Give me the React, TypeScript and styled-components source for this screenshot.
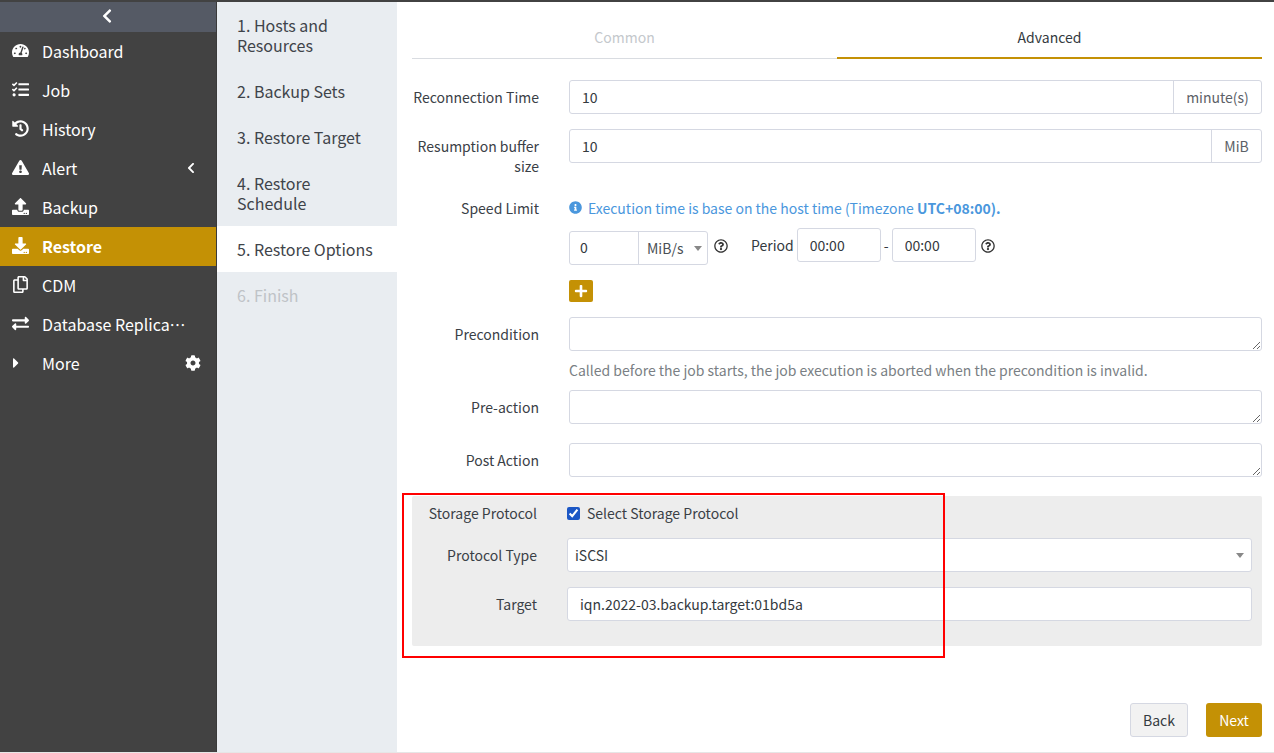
import React from "react";
import styled, { createGlobalStyle } from "styled-components";
import {
  FaCaretRight,
  FaChevronLeft,
  FaCog,
  FaDownload,
  FaExchangeAlt,
  FaExclamationTriangle,
  FaHistory,
  FaInfoCircle,
  FaPlus,
  FaRegCopy,
  FaRegQuestionCircle,
  FaTachometerAlt,
  FaTasks,
  FaUpload,
} from "react-icons/fa";

const GOLD = "#c49105";
const BORDER = "#d5d8e2";

const navItems = [
  { label: "Dashboard", icon: <FaTachometerAlt /> },
  { label: "Job", icon: <FaTasks /> },
  { label: "History", icon: <FaHistory /> },
  { label: "Alert", icon: <FaExclamationTriangle />, arrow: true },
  { label: "Backup", icon: <FaUpload /> },
  { label: "Restore", icon: <FaDownload />, active: true },
  { label: "CDM", icon: <FaRegCopy /> },
  { label: "Database Replication", icon: <FaExchangeAlt /> },
];

const steps = [
  { label: "1. Hosts and Resources" },
  { label: "2. Backup Sets" },
  { label: "3. Restore Target" },
  { label: "4. Restore Schedule" },
  { label: "5. Restore Options", active: true },
  { label: "6. Finish", disabled: true },
];

const App = () => {
  return (
    <Shell>
      <GlobalStyle />
      <Sidebar>
        <Collapse>
          <FaChevronLeft />
        </Collapse>
        {navItems.map((item) => (
          <NavItem key={item.label} $active={item.active}>
            <NavIcon>{item.icon}</NavIcon>
            <NavLabel>{item.label}</NavLabel>
            {item.arrow && (
              <NavArrow>
                <FaChevronLeft />
              </NavArrow>
            )}
          </NavItem>
        ))}
        <NavItem>
          <MoreCaret>
            <FaCaretRight />
          </MoreCaret>
          <NavLabel>More</NavLabel>
          <NavGear>
            <FaCog />
          </NavGear>
        </NavItem>
      </Sidebar>

      <Steps>
        {steps.map((step) => (
          <Step key={step.label} $active={step.active} $disabled={step.disabled}>
            {step.label}
          </Step>
        ))}
      </Steps>

      <Main>
        <Tabs>
          <Tab>Common</Tab>
          <Tab $active>Advanced</Tab>
        </Tabs>

        <Row $top={21}>
          <Label>Reconnection Time</Label>
          <Group>
            <GroupInput readOnly value="10" />
            <Addon $width={88}>minute(s)</Addon>
          </Group>
        </Row>

        <Row $top={15}>
          <Label>Resumption buffer size</Label>
          <Group>
            <GroupInput readOnly value="10" />
            <Addon $width={50}>MiB</Addon>
          </Group>
        </Row>

        <Row $top={15}>
          <Label>Speed Limit</Label>
          <Info>
            <FaInfoCircle />
            <span>
              Execution time is base on the host time (Timezone <b>UTC+08:00).</b>
            </span>
          </Info>
        </Row>

        <LimitRow>
          <UnitGroup>
            <UnitValue>0</UnitValue>
            <UnitSelect>
              MiB/s
              <Caret />
            </UnitSelect>
          </UnitGroup>
          <Help $left={6}>
            <FaRegQuestionCircle />
          </Help>
          <PeriodLabel>Period</PeriodLabel>
          <TimeInput readOnly value="00:00" />
          <Dash>-</Dash>
          <TimeInput readOnly value="00:00" />
          <Help $left={5}>
            <FaRegQuestionCircle />
          </Help>
        </LimitRow>

        <AddButton aria-label="Add">
          <FaPlus />
        </AddButton>

        <Row $top={15}>
          <Label>Precondition</Label>
          <Area readOnly />
        </Row>
        <Hint>Called before the job starts, the job execution is aborted when the precondition is invalid.</Hint>

        <Row $top={9}>
          <Label>Pre-action</Label>
          <Area readOnly />
        </Row>

        <Row $top={19}>
          <Label>Post Action</Label>
          <Area readOnly />
        </Row>

        <Panel>
          <PanelRow>
            <PanelLabel>Storage Protocol</PanelLabel>
            <CheckLabel>
              <Check type="checkbox" checked readOnly />
              Select Storage Protocol
            </CheckLabel>
          </PanelRow>
          <PanelRow $top={14}>
            <PanelLabel>Protocol Type</PanelLabel>
            <SelectBox>
              iSCSI
              <Caret />
            </SelectBox>
          </PanelRow>
          <PanelRow $top={15}>
            <PanelLabel>Target</PanelLabel>
            <TextInput readOnly value="iqn.2022-03.backup.target:01bd5a" />
          </PanelRow>
        </Panel>

        <Footer>
          <BackButton>Back</BackButton>
          <NextButton>Next</NextButton>
        </Footer>

        <Highlight />
      </Main>
    </Shell>
  );
};

export default App;

const GlobalStyle = createGlobalStyle`
  * {
    box-sizing: border-box;
  }
  body {
    margin: 0;
    font-family: "Noto Sans CJK SC", "Noto Sans", sans-serif;
    font-size: 14px;
    color: #343a40;
    background: #fff;
    overflow: hidden;
  }
  input, textarea, button {
    font-family: inherit;
    font-size: 14px;
    color: #343a40;
  }
`;

const Shell = styled.div`
  display: flex;
  height: 753px;
  border-top: 2px solid #424242;
  border-bottom: 1px solid #e6e6e6;
  position: relative;
`;

const Sidebar = styled.nav`
  width: 217px;
  flex: none;
  background: #424242;
  color: #fff;
  border-right: 1px solid #3a3a3a;
`;

const Collapse = styled.div`
  height: 30px;
  background: #555a65;
  display: flex;
  align-items: center;
  justify-content: center;
  font-size: 16px;
  padding: 0 3px 2px 0;
`;

const NavItem = styled.div<{ $active?: boolean }>`
  height: 39px;
  display: flex;
  align-items: center;
  padding: 0 14px 2px 12px;
  font-size: 16px;
  font-weight: ${(props) => (props.$active ? 700 : 400)};
  background: ${(props) => (props.$active ? GOLD : "transparent")};
`;

const NavIcon = styled.span`
  width: 30px;
  flex: none;
  display: flex;
  align-items: center;
  font-size: 17px;
`;

const MoreCaret = styled(NavIcon)`
  font-size: 16px;
  svg {
    margin-left: -4px;
  }
`;

const NavLabel = styled.span`
  flex: 1;
  min-width: 0;
  overflow: hidden;
  white-space: nowrap;
  text-overflow: ellipsis;
  max-width: 146px;
`;

const NavArrow = styled.span`
  display: flex;
  font-size: 12px;
  margin-right: 5px;
  margin-left: auto;
`;

const NavGear = styled.span`
  display: flex;
  font-size: 16px;
  margin-left: auto;
  margin-right: 1px;
`;

const Steps = styled.div`
  width: 180px;
  flex: none;
  background: #e9edf1;
`;

const Step = styled.div<{ $active?: boolean; $disabled?: boolean }>`
  padding: 13px 20px;
  font-size: 16px;
  line-height: 20px;
  background: ${(props) => (props.$active ? "#fff" : "transparent")};
  color: ${(props) => (props.$disabled ? "#bfc3c7" : "#3f444a")};
`;

const Main = styled.main`
  flex: 1;
  min-width: 0;
  padding: 0 12px 0 15px;
`;

const Tabs = styled.div`
  display: flex;
  height: 57px;
  padding-top: 15px;
`;

const Tab = styled.div<{ $active?: boolean }>`
  flex: 1;
  text-align: center;
  line-height: 40px;
  color: ${(props) => (props.$active ? "#343a40" : "#c4c8cc")};
  border-bottom: ${(props) => (props.$active ? `2px solid ${GOLD}` : "1px solid #d9dce1")};
`;

const Row = styled.div<{ $top?: number }>`
  display: flex;
  align-items: flex-start;
  gap: 30px;
  margin-top: ${(props) => props.$top ?? 0}px;
`;

const Label = styled.label`
  width: 127px;
  flex: none;
  padding-top: 7px;
  text-align: right;
  line-height: 20px;
  color: #3a4046;
`;

const Group = styled.div`
  flex: 1;
  display: flex;
  height: 34px;
  border: 1px solid ${BORDER};
  border-radius: 3px;
`;

const GroupInput = styled.input`
  flex: 1;
  min-width: 0;
  border: 0;
  outline: 0;
  padding: 0 12px 1px;
  background: transparent;
`;

const Addon = styled.div<{ $width: number }>`
  width: ${(props) => props.$width}px;
  flex: none;
  border-left: 1px solid ${BORDER};
  display: flex;
  align-items: center;
  justify-content: center;
  color: #5c6167;
`;

const Info = styled.div`
  display: flex;
  align-items: center;
  gap: 6px;
  height: 27px;
  padding-top: 6px;
  color: #4a97dd;
  white-space: nowrap;
  svg {
    font-size: 13px;
  }
  b {
    font-weight: 700;
  }
`;

const LimitRow = styled.div`
  display: flex;
  align-items: center;
  margin: 10px 0 0 157px;
  height: 34px;
`;

const UnitGroup = styled.div`
  display: flex;
  align-self: flex-start;
  width: 139px;
  height: 34px;
  margin-top: 3px;
  border: 1px solid ${BORDER};
  border-radius: 3px;
`;

const UnitValue = styled.div`
  width: 69px;
  padding-left: 10px;
  line-height: 31px;
  border-right: 1px solid ${BORDER};
`;

const UnitSelect = styled.div`
  flex: 1;
  display: flex;
  align-items: center;
  justify-content: space-between;
  padding: 0 5px 0 8px;
  color: #4a5056;
`;

const Caret = styled.span`
  width: 0;
  height: 0;
  border-left: 4px solid transparent;
  border-right: 4px solid transparent;
  border-top: 5px solid #888;
`;

const Help = styled.span<{ $left: number }>`
  display: flex;
  margin-left: ${(props) => props.$left}px;
  margin-top: 2px;
  font-size: 14px;
  color: #333;
`;

const PeriodLabel = styled.span`
  margin-left: 23px;
  margin-right: 3px;
`;

const TimeInput = styled.input`
  width: 84px;
  height: 34px;
  border: 1px solid ${BORDER};
  border-radius: 3px;
  padding: 0 12px;
  outline: 0;
`;

const Dash = styled.span`
  width: 11px;
  text-align: center;
`;

const AddButton = styled.button`
  display: flex;
  align-items: center;
  justify-content: center;
  width: 24px;
  height: 22px;
  margin: 18px 0 0 157px;
  padding: 0;
  border: 0;
  border-radius: 2px;
  background: ${GOLD};
  color: #fff;
  font-size: 14px;
`;

const Area = styled.textarea`
  flex: 1;
  height: 34px;
  border: 1px solid ${BORDER};
  border-radius: 3px;
  outline: 0;
  padding: 6px 12px;
  display: block;
`;

const Hint = styled.div`
  margin: 9px 0 0 157px;
  line-height: 21px;
  color: #7a7f84;
`;

const Panel = styled.section`
  height: 150px;
  margin-top: 19px;
  padding: 6px 10px 0 0;
  background: #ededed;
  border-radius: 2px;
`;

const PanelRow = styled.div<{ $top?: number }>`
  display: flex;
  align-items: center;
  gap: 30px;
  margin-top: ${(props) => props.$top ?? 0}px;
`;

const PanelLabel = styled.span`
  width: 125px;
  flex: none;
  text-align: right;
  color: #3a4046;
  white-space: nowrap;
`;

const CheckLabel = styled.label`
  display: flex;
  align-items: center;
  height: 22px;
  color: #3a4046;
`;

const Check = styled.input`
  width: 13px;
  height: 13px;
  margin: 0 7px 0 0;
  accent-color: #1c57c5;
`;

const SelectBox = styled.div`
  flex: 1;
  height: 34px;
  display: flex;
  align-items: center;
  justify-content: space-between;
  padding: 0 7px 0 7px;
  background: #fff;
  border: 1px solid ${BORDER};
  border-radius: 3px;
`;

const TextInput = styled.input`
  flex: 1;
  height: 34px;
  padding: 0 12px;
  background: #fff;
  border: 1px solid ${BORDER};
  border-radius: 3px;
  outline: 0;
`;

const Footer = styled.div`
  display: flex;
  justify-content: flex-end;
  gap: 18px;
  margin-top: 57px;
`;

const BackButton = styled.button`
  width: 58px;
  height: 34px;
  padding: 0;
  background: #f2f2f2;
  border: 1px solid ${BORDER};
  border-radius: 3px;
`;

const NextButton = styled.button`
  width: 56px;
  height: 34px;
  padding: 0;
  background: ${GOLD};
  border: 0;
  border-radius: 3px;
  color: #fff;
`;

// annotation drawn over the screenshot
const Highlight = styled.div`
  position: absolute;
  left: 402px;
  top: 491px;
  width: 543px;
  height: 165px;
  border: 2px solid #f00;
  pointer-events: none;
`;
